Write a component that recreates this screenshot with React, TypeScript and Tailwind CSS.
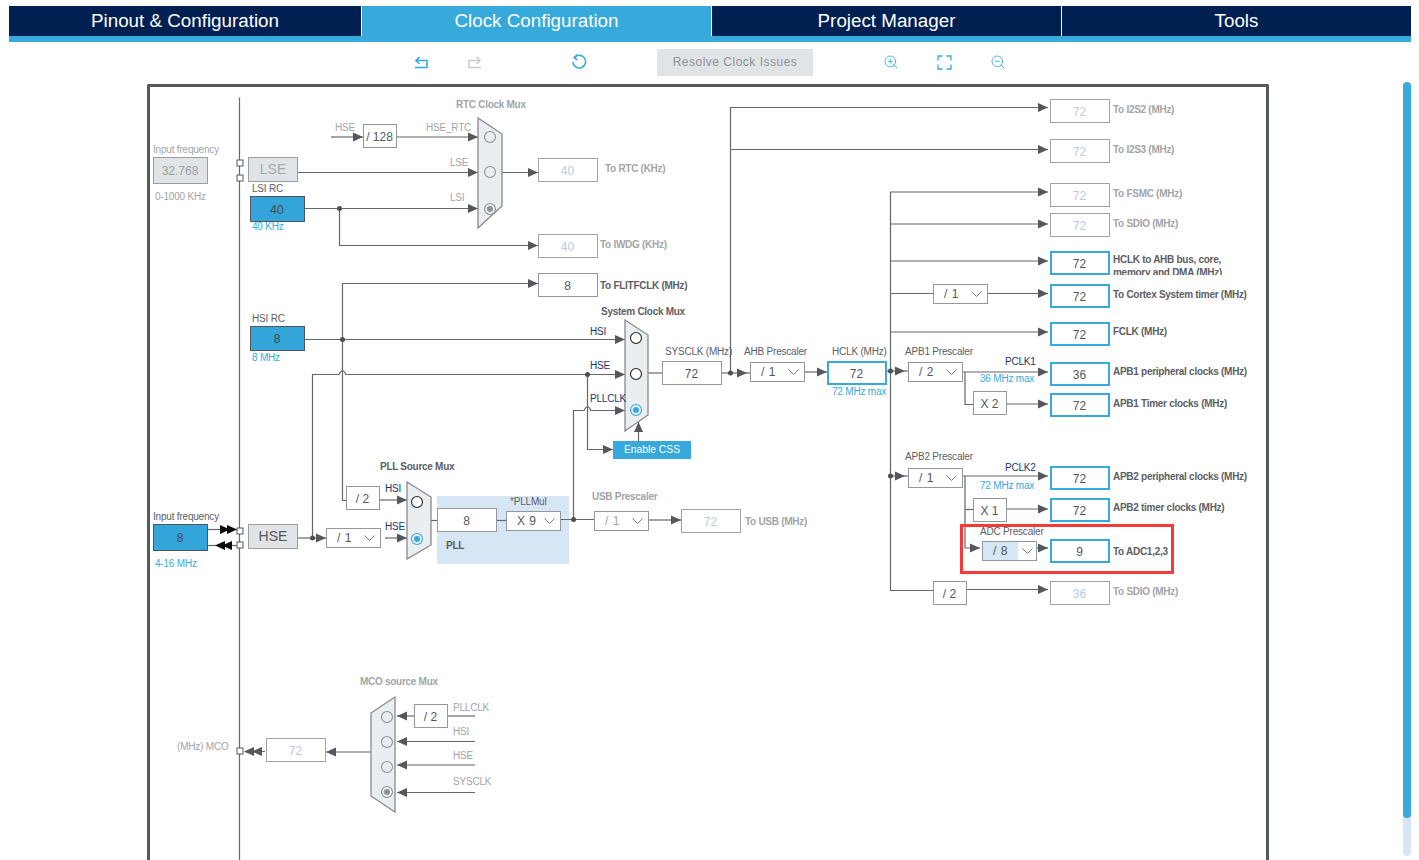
import type * as React from "react";
import { ZoomIn, ZoomOut } from "lucide-react";

// padding box of the diagram frame, in page coordinates
const X0 = 150;
const Y0 = 87;

type BoxKind = "off" | "on" | "plain" | "grey" | "blue";

const boxClass: Record<BoxKind, string> = {
  off: "bg-white border border-[#9fa3a7] text-[#b6cce2]",
  on: "bg-white border-2 border-[#38a9db] text-[#54585c]",
  plain: "bg-white border border-[#94989c] text-[#54585c]",
  grey: "bg-[#e1e4e7] border border-[#9a9ea2] text-[#9a9ea2]",
  blue: "bg-[#34a5da] border border-[#50565a] text-[#44484c]",
};

const boxes: [number, number, number, number, string, BoxKind][] = [
  [1050, 99, 60, 24, "72", "off"],
  [1050, 139, 60, 24, "72", "off"],
  [1050, 183, 60, 24, "72", "off"],
  [1050, 213, 60, 24, "72", "off"],
  [1050, 251, 60, 24, "72", "on"],
  [1050, 284, 60, 24, "72", "on"],
  [1050, 322, 60, 24, "72", "on"],
  [1050, 362, 60, 24, "36", "on"],
  [1050, 393, 60, 24, "72", "on"],
  [1050, 466, 60, 24, "72", "on"],
  [1050, 498, 60, 24, "72", "on"],
  [1050, 539, 60, 24, "9", "on"],
  [1050, 581, 60, 24, "36", "off"],
  [538, 158, 60, 24, "40", "off"],
  [538, 234, 60, 24, "40", "off"],
  [538, 273, 60, 24, "8", "plain"],
  [681, 509, 60, 24, "72", "off"],
  [266, 738, 60, 24, "72", "off"],
  [662, 361, 60, 24, "72", "plain"],
  [827, 361, 60, 24, "72", "on"],
  [437, 508, 60, 24, "8", "plain"],
  [363, 124, 34, 24, "/ 128", "plain"],
  [346, 486, 34, 24, "/ 2", "plain"],
  [973, 391, 34, 24, "X 2", "plain"],
  [973, 498, 34, 24, "X 1", "plain"],
  [933, 581, 34, 24, "/ 2", "plain"],
  [414, 704, 34, 24, "/ 2", "plain"],
  [153, 157, 55, 27, "32.768", "grey"],
  [250, 196, 55, 26, "40", "blue"],
  [250, 326, 55, 25, "8", "blue"],
  [153, 524, 55, 27, "8", "blue"],
];

const selects: [number, number, string, boolean?][] = [
  [326, 528, "/ 1"],
  [506, 511, "X 9"],
  [594, 511, "/ 1", true],
  [750, 362, "/ 1"],
  [908, 362, "/ 2"],
  [933, 284, "/ 1"],
  [908, 468, "/ 1"],
];

const grey = "text-[#a2a5a8]";
const dark = "text-[#5c6064]";
const navy = "text-[#1d3768]";
const sky = "text-[#38a9db]";

// x, centre y, text, colour, bold
const labels: [number, number, string, string, boolean?][] = [
  [1113, 110, "To I2S2 (MHz)", grey, true],
  [1113, 150, "To I2S3 (MHz)", grey, true],
  [1113, 194, "To FSMC (MHz)", grey, true],
  [1113, 224, "To SDIO (MHz)", grey, true],
  [1113, 295, "To Cortex System timer (MHz)", dark, true],
  [1113, 332, "FCLK (MHz)", dark, true],
  [1113, 372, "APB1 peripheral clocks (MHz)", dark, true],
  [1113, 404, "APB1 Timer clocks (MHz)", dark, true],
  [1113, 477, "APB2 peripheral clocks (MHz)", dark, true],
  [1113, 508, "APB2 timer clocks (MHz)", dark, true],
  [1113, 552, "To ADC1,2,3", dark, true],
  [1113, 592, "To SDIO (MHz)", grey, true],
  [605, 169, "To RTC (KHz)", grey, true],
  [600, 245, "To IWDG (KHz)", grey, true],
  [600, 286, "To FLITFCLK (MHz)", dark, true],
  [745, 522, "To USB (MHz)", grey, true],
  [456, 105, "RTC Clock Mux", grey, true],
  [601, 312, "System Clock Mux", dark, true],
  [380, 467, "PLL Source Mux", dark, true],
  [592, 497, "USB Prescaler", grey, true],
  [360, 682, "MCO source Mux", grey, true],
  [153, 150, "Input frequency", grey],
  [155, 197, "0-1000 KHz", grey],
  [252, 189, "LSI RC", dark],
  [252, 227, "40 KHz", sky],
  [252, 319, "HSI RC", dark],
  [252, 358, "8 MHz", sky],
  [153, 517, "Input frequency", dark],
  [155, 564, "4-16 MHz", sky],
  [335, 128, "HSE", grey],
  [426, 128, "HSE_RTC", grey],
  [450, 163, "LSE", grey],
  [450, 198, "LSI", grey],
  [385, 489, "HSI", navy],
  [385, 527, "HSE", navy],
  [510, 502, "*PLLMul", dark],
  [446, 546, "PLL", dark, true],
  [590, 332, "HSI", navy],
  [590, 366, "HSE", navy],
  [590, 399, "PLLCLK", navy],
  [665, 352, "SYSCLK (MHz)", dark],
  [744, 352, "AHB Prescaler", dark],
  [832, 352, "HCLK (MHz)", dark],
  [832, 392, "72 MHz max", sky],
  [905, 352, "APB1 Prescaler", dark],
  [1005, 362, "PCLK1", navy],
  [980, 379, "36 MHz max", sky],
  [905, 457, "APB2 Prescaler", dark],
  [1005, 468, "PCLK2", navy],
  [980, 486, "72 MHz max", sky],
  [980, 532, "ADC Prescaler", dark],
  [177, 747, "(MHz) MCO", grey],
  [453, 708, "PLLCLK", grey],
  [453, 732, "HSI", grey],
  [453, 756, "HSE", grey],
  [453, 782, "SYSCLK", grey],
];

const wires: string[] = [
  "M239.5 97.5V860",
  // RTC
  "M331 137H363", "M397 137H478", "M298 172.5H478", "M305 208.5H478",
  "M339.5 208.5V245.5H538", "M502 172.5H538",
  // HSI / HSE / PLL
  "M305 339.5H625", "M342.5 339.5V283.5H538",
  "M342.5 339.5V500.5H346", "M380 500H407",
  "M298 538H326", "M312.5 538V374.5H339Q342.5 367 346 374.5H625",
  "M385 538H407",
  "M431 520.5H437", "M497 520.5H506", "M561 519.5H594", "M649 520H681",
  "M573.5 519.5V410.5H584Q587.5 403 591 410.5H625",
  "M587.5 374.5V449.5H613", "M638.5 441V422",
  // SYSCLK -> HCLK
  "M648 373H662", "M722 373H750", "M805 372H827",
  "M730.5 373V107.5H1048", "M730.5 149.5H1048",
  // HCLK tree
  "M887 371H908", "M890.5 192V590.5H933",
  "M890 192H1048", "M890 224H1048", "M890 261H1048", "M890 293.5H933", "M988 293.5H1048", "M890 332H1048",
  "M963 372H1048", "M965 372V404.5H973", "M1007 404H1048",
  "M890 476H908", "M963 476H1048", "M965 476V548H980", "M965 509.5H973", "M1007 509H1048", "M1037 548H1048",
  "M967 589.5H1048",
  // MCO
  "M371 752H326", "M265 751.5H245",
  "M414 716H397", "M475 716H448", "M475 741.5H397", "M475 765H397", "M475 792.5H397",
  // ext oscillator pins
  "M208 529.5H237", "M208 545.5H237",
];

// tip x, tip y, direction
const arrows: [number, number, "r" | "l" | "u"][] = [
  [363, 137, "r"], [478, 137, "r"], [478, 172.5, "r"], [478, 208.5, "r"], [538, 172.5, "r"], [538, 245.5, "r"], [538, 283.5, "r"],
  [625, 339.5, "r"], [625, 374.5, "r"], [625, 410.5, "r"], [613, 449.5, "r"], [638.5, 422, "u"],
  [407, 500, "r"], [407, 538, "r"], [326, 538, "r"], [681, 520, "r"],
  [673, 373, "r"], [747, 373, "r"], [827, 372, "r"], [905, 371, "r"],
  [1048, 107.5, "r"], [1048, 149.5, "r"], [1048, 192, "r"], [1048, 224, "r"], [1048, 261, "r"], [1048, 293.5, "r"], [1048, 332, "r"],
  [1048, 372, "r"], [1048, 404, "r"], [905, 476, "r"], [1048, 476, "r"], [1048, 509, "r"], [980, 548, "r"], [1048, 548, "r"], [1048, 589.5, "r"],
  [326, 752, "l"], [244, 751.5, "l"], [252, 751.5, "l"],
  [397, 716, "l"], [397, 741.5, "l"], [397, 765, "l"], [397, 792.5, "l"],
];

const blackArrows: [number, number, "r" | "l"][] = [
  [230, 529.5, "r"], [237, 529.5, "r"], [215, 545.5, "l"], [222, 545.5, "l"],
];

const dots: [number, number][] = [
  [339.5, 208.5], [342.5, 339.5], [312.5, 538], [573.5, 519.5], [587.5, 374.5], [730.5, 373], [890.5, 371], [890.5, 476],
];

const pins: [number, number][] = [
  [240, 163], [240, 178], [240, 531], [240, 545], [240, 751],
];

const muxes: string[] = [
  "478,118 502,134 502,206 478,228",
  "407,482 431,497 431,545 407,559",
  "625,320 648,335 648,415 625,431",
  "395,697 371,713 371,796 395,812",
];

type RadioKind = "none" | "black" | "grey" | "blue";
const radios: [number, number, RadioKind][] = [
  [490, 137, "none"], [490, 172, "none"], [490, 209, "grey"],
  [417, 502, "black"], [417, 539, "blue"],
  [636, 338, "black"], [636, 374, "black"], [636, 410, "blue"],
  [387, 717, "none"], [387, 742, "none"], [387, 767, "none"], [387, 792, "grey"],
];

function arrowPoints(x: number, y: number, dir: "r" | "l" | "u") {
  if (dir === "r") return `${x},${y} ${x - 10},${y - 4.5} ${x - 10},${y + 4.5}`;
  if (dir === "l") return `${x},${y} ${x + 10},${y - 4.5} ${x + 10},${y + 4.5}`;
  return `${x},${y} ${x - 4.5},${y + 10} ${x + 4.5},${y + 10}`;
}

function at(x: number, y: number, w?: number, h?: number): React.CSSProperties {
  return { left: x - X0, top: y - Y0, width: w, height: h };
}

function Wires() {
  return (
    <svg
      className="absolute left-0 top-0"
      width={1116}
      height={773}
      viewBox={`${X0} ${Y0} 1116 773`}
      fill="none"
    >
      {wires.map((d) => (
        <path key={d} d={d} stroke="#63676b" strokeWidth={1.2} />
      ))}
      {arrows.map(([x, y, dir]) => (
        <polygon key={`${x}-${y}-${dir}`} points={arrowPoints(x, y, dir)} fill="#54585c" />
      ))}
      {blackArrows.map(([x, y, dir]) => (
        <polygon key={`${x}-${y}`} points={arrowPoints(x, y, dir)} fill="#0c0c0c" />
      ))}
      {dots.map(([x, y]) => (
        <circle key={`${x}-${y}`} cx={x} cy={y} r={2.5} fill="#4c5054" />
      ))}
      {muxes.map((p) => (
        <polygon key={p} points={p} fill="#ebeef0" stroke="#868b90" strokeWidth={1.3} />
      ))}
      {radios.map(([x, y, kind]) => (
        <g key={`${x}-${y}`}>
          <circle
            cx={x}
            cy={y}
            r={5.5}
            fill={kind === "black" ? "#fff" : "#ebeef0"}
            stroke={kind === "black" ? "#222" : kind === "blue" ? "#38a9db" : "#8d9195"}
            strokeWidth={1.1}
          />
          {kind === "blue" || kind === "grey" ? (
            <circle cx={x} cy={y} r={3} fill={kind === "blue" ? "#38a9db" : "#8d9195"} />
          ) : null}
        </g>
      ))}
      {pins.map(([x, y]) => (
        <rect key={`${x}-${y}`} x={x - 3} y={y - 3} width={6} height={6} fill="#fff" stroke="#54585c" />
      ))}
    </svg>
  );
}

function Chevron() {
  return (
    <svg width="11" height="6" viewBox="0 0 11 6" fill="none" stroke="#74787c" strokeWidth="1">
      <path d="M0.5 0.5L5.5 5.5L10.5 0.5" />
    </svg>
  );
}

function Select({ x, y, text, muted }: { x: number; y: number; text: string; muted?: boolean }) {
  return (
    <div
      className={`absolute flex items-center justify-between border border-[#94989c] bg-white pl-[10px] pr-[5px] text-xs tracking-[0.5px] ${muted ? "text-[#a2a5a8]" : "text-[#54585c]"}`}
      style={at(x, y, 55, 20)}
    >
      <span>{text}</span>
      <Chevron />
    </div>
  );
}

function Tab({ label, active, width }: { label: string; active?: boolean; width: string }) {
  return (
    <div
      className={`flex h-[30px] items-center justify-center border-r border-white text-[18.8px] text-white last:border-r-0 ${width} ${active ? "bg-[#38a9db]" : "bg-[#002052]"}`}
    >
      {label}
    </div>
  );
}

function UndoIcon({ flip, color }: { flip?: boolean; color: string }) {
  return (
    <svg
      width="14"
      height="13"
      viewBox="0 0 14 13"
      fill="none"
      stroke={color}
      strokeWidth="1.6"
      className={flip ? "-scale-x-100" : ""}
    >
      <path d="M5.5 1L2 4.5L5.5 8" />
      <path d="M2 4.5H13V11.5H1" />
    </svg>
  );
}

export default function App() {
  return (
    <div className="relative h-[860px] w-[1419px] overflow-hidden bg-white font-['Liberation_Sans',Arial,sans-serif]">
      <div className="ml-[9px] mt-[6px] flex w-[1402px] border-b-[6px] border-[#38a9db]">
        <Tab label="Pinout & Configuration" width="w-[353px]" />
        <Tab label="Clock Configuration" active width="w-[350px]" />
        <Tab label="Project Manager" width="w-[350px]" />
        <Tab label="Tools" width="w-[349px]" />
      </div>

      {/* toolbar */}
      <div className="relative flex h-[42px] items-center pb-[2px] pl-[414px]">
        <UndoIcon color="#38a9db" />
        <div className="w-[40px]" />
        <UndoIcon flip color="#c9cdd0" />
        <div className="w-[89px]" />
        <svg width="16" height="16" viewBox="0 0 16 16" fill="none" stroke="#38a9db" strokeWidth="1.6">
          <path d="M3.2 3.6A6.4 6.4 0 1 1 1.8 8" />
          <path d="M6.5 0.6L3.2 3.6L6.5 6" />
        </svg>
        <div className="w-[70px]" />
        <div className="flex h-[27px] w-[156px] items-center justify-center bg-[#e1e4e7] text-xs tracking-[0.5px] text-[#8e9296]">
          Resolve Clock Issues
        </div>
        <div className="w-[70px]" />
        <ZoomIn size={16} strokeWidth={1.3} color="#38a9db" />
        <div className="w-[38px]" />
        <svg width="15" height="15" viewBox="0 0 15 15" fill="none" stroke="#38a9db" strokeWidth="1.3">
          <path d="M1 5.5V1H5.5M9.5 1H14V5.5M14 9.5V14H9.5M5.5 14H1V9.5" />
        </svg>
        <div className="w-[38px]" />
        <ZoomOut size={16} strokeWidth={1.3} color="#38a9db" />
      </div>

      {/* diagram frame */}
      <div className="relative ml-[147px] h-[776px] w-[1122px] rounded-t-[2px] border-[3px] border-b-0 border-[#54595d]">
        <div className="absolute bg-[#d7e6f4]" style={at(437, 496, 132, 68)} />
        <Wires />

        {boxes.map(([x, y, w, h, text, kind]) => (
          <div
            key={`${x}-${y}`}
            className={`absolute flex items-center justify-center pr-px pt-px text-xs ${boxClass[kind]}`}
            style={at(x, y, w, h)}
          >
            {text}
          </div>
        ))}

        {selects.map(([x, y, text, muted]) => (
          <Select key={`${x}-${y}`} x={x} y={y} text={text} muted={muted} />
        ))}

        {/* ADC select has the tinted value area */}
        <div
          className="absolute flex items-stretch border border-[#94989c] bg-white text-xs tracking-[0.5px] text-[#54585c]"
          style={at(982, 541, 55, 20)}
        >
          <div className="flex w-[35px] items-center justify-center bg-[#d7e6f4]">/ 8</div>
          <div className="flex flex-1 items-center justify-center">
            <Chevron />
          </div>
        </div>

        <div
          className="absolute flex items-center justify-center border border-[#9a9ea2] bg-[#e1e4e7] pb-[2px] text-sm text-[#a6aaad]"
          style={at(248, 157, 50, 25)}
        >
          LSE
        </div>
        <div
          className="absolute flex items-center justify-center border border-[#9a9ea2] bg-[#e1e4e7] pb-[2px] text-sm text-[#54585c]"
          style={at(248, 524, 50, 25)}
        >
          HSE
        </div>
        <div
          className="absolute flex items-center justify-center bg-[#38a9db] text-[10.3px] text-white"
          style={at(613, 441, 78, 18)}
        >
          Enable CSS
        </div>

        {labels.map(([x, y, text, color, bold]) => (
          <div
            key={`${x}-${y}-${text}`}
            className={`absolute whitespace-nowrap text-[10px] leading-[14px] ${color} ${bold ? "font-bold tracking-[-0.28px]" : "tracking-[-0.2px]"}`}
            style={at(x, y - 7)}
          >
            {text}
          </div>
        ))}

        <div
          className="absolute overflow-hidden text-[10px] font-bold leading-[13px] tracking-[-0.28px] text-[#5c6064]"
          style={at(1113, 253, 125, 22)}
        >
          HCLK to AHB bus, core, memory and DMA (MHz)
        </div>

        {/* highlight around the ADC prescaler */}
        <div className="absolute border-[3px] border-[#f53a3a]" style={at(960, 524, 214, 50)} />
      </div>

      {/* scrollbar */}
      <div className="absolute left-[1403px] top-[82px] h-[774px] w-2 rounded-full bg-[#d7e6f4]">
        <div className="h-[736px] rounded-full bg-[#38a9db]" />
      </div>
    </div>
  );
}
